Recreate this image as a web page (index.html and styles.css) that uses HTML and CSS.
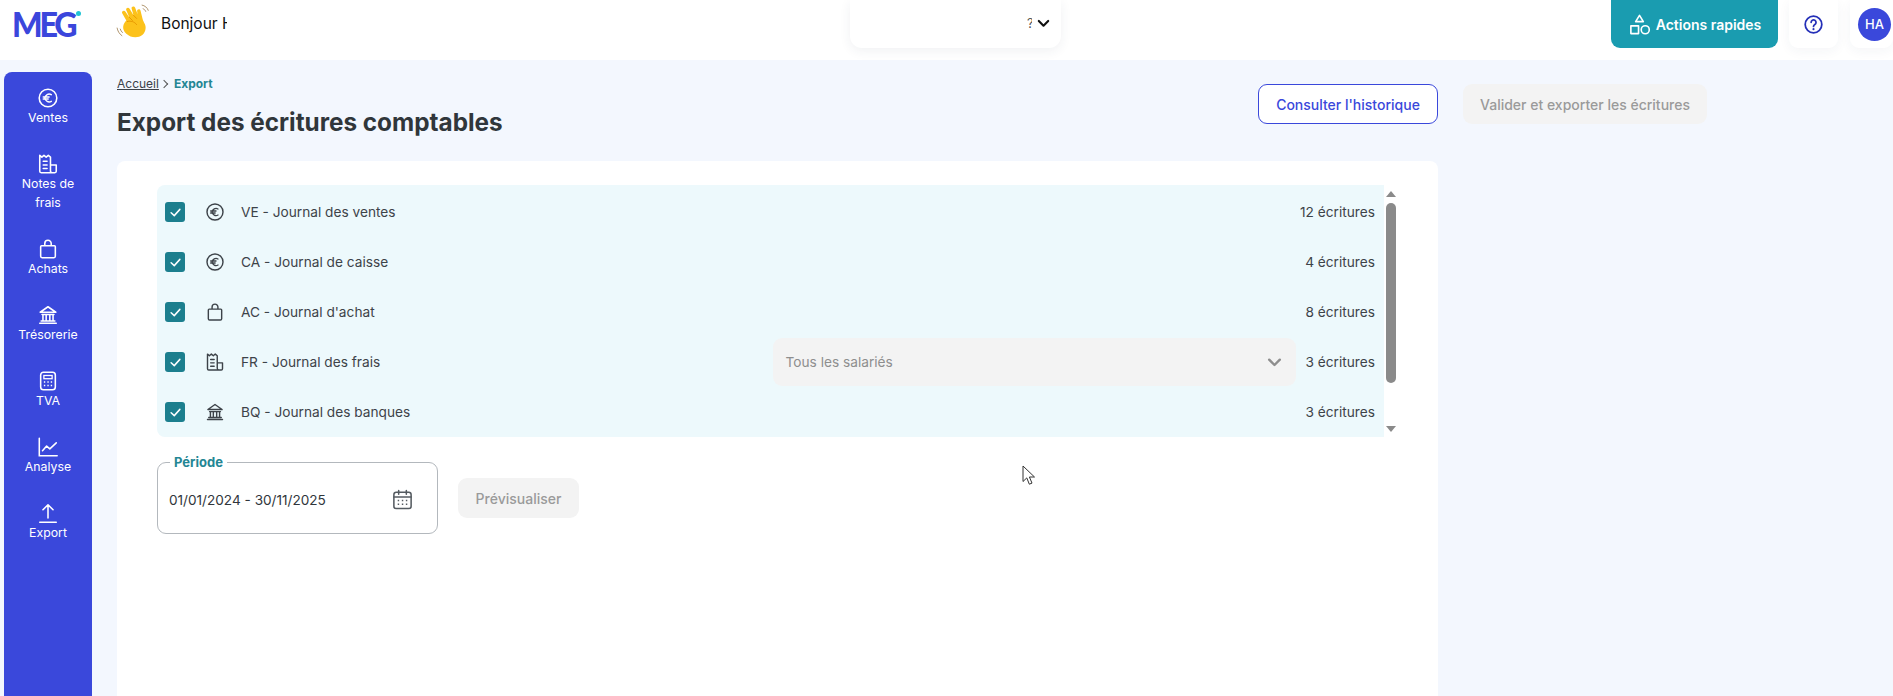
FILE: index.html
```html
<!DOCTYPE html>
<html lang="fr">
<head>
<meta charset="utf-8">
<title>Export des écritures comptables</title>
<link rel="stylesheet" href="styles.css">
</head>
<body>
<svg class="defs" width="0" height="0" aria-hidden="true">
  <symbol id="i-euro" viewBox="0 0 24 24"><circle cx="12" cy="12" r="9.600" fill="none" stroke="currentColor" stroke-width="1.700"/><path d="M15.600 8.400a4.600 4.600 0 0 0-7 3.600 4.600 4.600 0 0 0 7 3.600M6.800 10.800h6.400M6.800 13.200h5.400" fill="none" stroke="currentColor" stroke-width="1.600" stroke-linecap="round"/></symbol>
  <symbol id="i-receipt" viewBox="0 0 24 24"><path d="M17 21.500H4.500A1.500 1.500 0 0 1 3 20V2.500l2.300 2L7.600 2.500 10 4.500l2.300-2 2.400 2V19.500a2 2 0 0 0 2 2h2.800a1.500 1.500 0 0 0 1.500-1.500v-7h-6.500" fill="none" stroke="currentColor" stroke-width="1.700" stroke-linejoin="round"/><path d="M6.800 9h4.200M6.800 13h4.200M6.800 17h4.200" stroke="currentColor" stroke-width="1.700" stroke-linecap="round"/></symbol>
  <symbol id="i-bag" viewBox="0 0 24 24"><path d="M5 8.500h14a1 1 0 0 1 1 1V20a1.500 1.500 0 0 1-1.500 1.500h-13A1.500 1.500 0 0 1 4 20V9.500a1 1 0 0 1 1-1zM8.500 8.500V6a3.500 3.500 0 0 1 7 0v2.500" fill="none" stroke="currentColor" stroke-width="1.700" stroke-linejoin="round"/></symbol>
  <symbol id="i-bank" viewBox="0 0 24 24"><path d="M3.500 9 12 3l8.500 6zM5.500 11.500h13M6.500 12v6M10 12v6M14 12v6M17.500 12v6M4.500 18.500h15M3 21h18" fill="none" stroke="currentColor" stroke-width="1.700" stroke-linejoin="round" stroke-linecap="round"/></symbol>
  <symbol id="i-calc" viewBox="0 0 24 24"><rect x="4" y="2.500" width="16" height="19" rx="3" fill="none" stroke="currentColor" stroke-width="1.700"/><rect x="7.500" y="6" width="9" height="3.500" fill="none" stroke="currentColor" stroke-width="1.400"/><path d="M7.500 13h1.500M11.300 13h1.500M15 13h1.500M7.500 17h1.500M11.300 17h1.500M15 17h1.500" stroke="currentColor" stroke-width="1.700"/></symbol>
  <symbol id="i-chart" viewBox="0 0 24 24"><path d="M2.500 2.500V21.500H22" fill="none" stroke="currentColor" stroke-width="1.700" stroke-linecap="round"/><path d="M6 16l4.500-5 3.500 3 7-6.500" fill="none" stroke="currentColor" stroke-width="1.700" stroke-linecap="round" stroke-linejoin="round"/></symbol>
  <symbol id="i-export" viewBox="0 0 24 24"><path d="M12 17.500V3M6.500 8.500 12 3l5.500 5.500M3 22h18" fill="none" stroke="currentColor" stroke-width="1.700" stroke-linecap="round" stroke-linejoin="round"/></symbol>
  <symbol id="i-check" viewBox="0 0 24 24"><path d="M5 12.500 10 17l9-10" fill="none" stroke="currentColor" stroke-width="2.400" stroke-linecap="round" stroke-linejoin="round"/></symbol>
  <symbol id="i-chev" viewBox="0 0 24 24"><path d="M4.500 8 12 15.500 19.500 8" fill="none" stroke="currentColor" stroke-width="3.400" stroke-linecap="round" stroke-linejoin="round"/></symbol>
</svg>

<header class="topbar">
  <div class="brand"><span class="logo">MEG</span><span class="logo-dot"></span></div>
  <svg class="wave" viewBox="0 0 36 36" aria-hidden="true">
    <path d="M11 30C6 25 8 20 11 17L7 10c-1-2 2-3.500 3.200-1.500L14 14l-3-7c-1-2 2-3.500 3.200-1.500L18 12l-1.800-6.500c-.6-2.200 2.600-3 3.400-.8L22 11l-.5-3c-.3-2.200 2.800-2.800 3.300-.6l2 8c1 4 3.200 5 3 9-.3 6-5 9-10 9-3.500 0-6-1-8.800-3.400z" fill="#fcc21b"/>
    <path d="M12 18c3-1 7 0 9 3M14 14l3 3M18 12l3 3" fill="none" stroke="#e59600" stroke-width=".9" stroke-linecap="round"/>
    <path d="M2 24c.5 3 2 6 5 8M5 25c.5 1.500 1.200 3 2.500 4M26 2c3 .5 5.500 2.500 6.500 5.500M27 5.500c1.500.5 2.500 1.500 3 3" fill="none" stroke="#a98d63" stroke-width=".9"/>
  </svg>
  <div class="hello">Bonjour Hugo</div>
  <div class="company"><span class="company-name">?</span><svg class="company-chev"><use href="#i-chev"/></svg></div>
  <button class="quick">
    <svg class="quick-ico" viewBox="0 0 24 24" aria-hidden="true"><path d="M12 2.500 16 9H8zM3 13.500h8v8H3z" fill="none" stroke="currentColor" stroke-width="1.700" stroke-linejoin="round"/><circle cx="18" cy="17.500" r="4.200" fill="none" stroke="currentColor" stroke-width="1.700"/></svg>
    Actions rapides
  </button>
  <div class="tile"><svg class="help" viewBox="0 0 24 24" aria-hidden="true"><circle cx="12" cy="12" r="9.500" fill="none" stroke="currentColor" stroke-width="2"/><path d="M9.300 9.500a2.800 2.800 0 1 1 4.300 2.400c-1 .6-1.600 1.200-1.600 2.300" fill="none" stroke="currentColor" stroke-width="2" stroke-linecap="round"/><circle cx="12" cy="17.300" r="1.200" fill="currentColor"/></svg></div>
  <div class="tile tile-user"><span class="avatar">HA</span></div>
</header>

<div class="app">
  <nav class="sidebar">
    <a class="nav-item"><svg class="nav-ico"><use href="#i-euro"/></svg><span>Ventes</span></a>
    <a class="nav-item"><svg class="nav-ico"><use href="#i-receipt"/></svg><span>Notes de frais</span></a>
    <a class="nav-item"><svg class="nav-ico"><use href="#i-bag"/></svg><span>Achats</span></a>
    <a class="nav-item"><svg class="nav-ico"><use href="#i-bank"/></svg><span>Trésorerie</span></a>
    <a class="nav-item"><svg class="nav-ico"><use href="#i-calc"/></svg><span>TVA</span></a>
    <a class="nav-item"><svg class="nav-ico"><use href="#i-chart"/></svg><span>Analyse</span></a>
    <a class="nav-item"><svg class="nav-ico"><use href="#i-export"/></svg><span>Export</span></a>
  </nav>

  <main class="content">
    <div class="head">
      <div class="head-left">
        <div class="crumbs"><a class="crumb-link">Accueil</a><span class="crumb-sep"></span><span class="crumb-cur">Export</span></div>
        <h1 class="title">Export des écritures comptables</h1>
      </div>
      <button class="btn-outline">Consulter l'historique</button>
    </div>
    <button class="btn-disabled btn-validate">Valider et exporter les écritures</button>

    <section class="card">
      <div class="list-wrap">
        <ul class="list">
          <li class="row"><span class="check"><svg><use href="#i-check"/></svg></span><svg class="row-ico"><use href="#i-euro"/></svg><span class="row-name">VE - Journal des ventes</span><span class="row-count">12 écritures</span></li>
          <li class="row"><span class="check"><svg><use href="#i-check"/></svg></span><svg class="row-ico"><use href="#i-euro"/></svg><span class="row-name">CA - Journal de caisse</span><span class="row-count">4 écritures</span></li>
          <li class="row"><span class="check"><svg><use href="#i-check"/></svg></span><svg class="row-ico"><use href="#i-bag"/></svg><span class="row-name">AC - Journal d'achat</span><span class="row-count">8 écritures</span></li>
          <li class="row"><span class="check"><svg><use href="#i-check"/></svg></span><svg class="row-ico"><use href="#i-receipt"/></svg><span class="row-name">FR - Journal des frais</span>
            <div class="select"><span>Tous les salariés</span><svg class="select-chev"><use href="#i-chev"/></svg></div>
            <span class="row-count">3 écritures</span></li>
          <li class="row"><span class="check"><svg><use href="#i-check"/></svg></span><svg class="row-ico"><use href="#i-bank"/></svg><span class="row-name">BQ - Journal des banques</span><span class="row-count">3 écritures</span></li>
        </ul>
        <div class="scrollbar"><span class="arrow-up"></span><span class="thumb"></span><span class="arrow-down"></span></div>
      </div>
      <div class="filters">
        <fieldset class="period">
          <legend>Période</legend>
          <span class="dates">01/01/2024 - 30/11/2025</span>
          <svg class="cal" viewBox="0 0 24 24" aria-hidden="true"><rect x="3" y="4.500" width="18" height="17" rx="2.500" fill="none" stroke="currentColor" stroke-width="1.600"/><path d="M3 9.500h18M8 2.500v4M16 2.500v4" fill="none" stroke="currentColor" stroke-width="1.600" stroke-linecap="round"/><path d="M7 13h1.500M11.300 13h1.500M15.500 13H17M7 17h1.500M11.300 17h1.500M15.500 17H17" stroke="currentColor" stroke-width="1.500"/></svg>
        </fieldset>
        <button class="btn-disabled btn-preview">Prévisualiser</button>
      </div>
    </section>
  </main>
</div>

<svg class="cursor" viewBox="0 0 14 21" aria-hidden="true"><path d="M1 1v15.500l3.800-3.600 2.500 6.300 2.700-1.100-2.600-6.100H12.500z" fill="#fff" stroke="#333" stroke-width="1"/></svg>
</body>
</html>
```
FILE: styles.css
```css
* { box-sizing: border-box; }
html, body { margin: 0; padding: 0; }
body {
  width: 1893px;
  height: 696px;
  overflow: hidden;
  background: #f3f7fe;
  font-family: Inter, "Noto Sans", sans-serif;
  color: #3d4349;
  position: relative;
}
.defs { position: absolute; }
button { font-family: inherit; }

/* top bar */
.topbar {
  height: 60px;
  background: #fff;
  display: flex;
  align-items: flex-start;
  padding-left: 12px;
}
.brand { width: 103px; height: 47px; display: flex; align-items: flex-start; }
.logo {
  font-family: Lato, sans-serif;
  font-weight: 900;
  font-size: 35px;
  line-height: 46px;
  letter-spacing: -3.500px;
  color: #3b46dc;
  transform: scaleX(.92);
  transform-origin: left center;
}
.logo-dot {
  width: 5px;
  height: 5px;
  border-radius: 50%;
  background: #20c4d4;
  margin: 11px 0 0 -4px;
}
.wave { width: 37px; height: 37px; margin-top: 3px; flex: none; }
.hello {
  width: 66px;
  margin: 14px 0 0 9px;
  overflow: hidden;
  white-space: nowrap;
  font-size: 15.500px;
  line-height: 20px;
  color: #111;
}
.company {
  width: 211px;
  height: 48px;
  margin-left: 623px;
  border-radius: 0 0 12px 12px;
  background: #fff;
  box-shadow: 0 3px 12px rgba(40, 50, 90, .07);
  display: flex;
  justify-content: flex-end;
  align-items: flex-start;
  padding: 13px 10px 0 0;
}
.company-name { font-size: 13px; line-height: 20px; width: 5px; overflow: hidden; color: #555; }
.company-chev { width: 15px; height: 15px; margin: 3px 0 0 4px; color: #111; }
.quick {
  width: 167px;
  height: 48px;
  margin-left: 550px;
  border: 0;
  border-radius: 0 0 9px 9px;
  background: #1a9cb0;
  color: #fff;
  font-size: 14px;
  font-weight: 600;
  display: flex;
  align-items: center;
  justify-content: center;
  gap: 5px;
  padding: 0;
}
.quick-ico { width: 23px; height: 23px; }
.tile {
  width: 49px;
  height: 48px;
  margin-left: 11px;
  border-radius: 0 0 9px 9px;
  background: #fff;
  box-shadow: 0 3px 12px rgba(40, 50, 90, .05);
  display: flex;
  align-items: center;
  justify-content: center;
}
.help { width: 21px; height: 21px; color: #2530b8; }
.tile-user { margin-left: 12px; width: 43px; justify-content: flex-start; padding-left: 8px; }
.avatar {
  width: 33px;
  height: 33px;
  flex: none;
  border-radius: 50%;
  background: #3a48db;
  color: #fff;
  font-size: 13px;
  font-weight: 500;
  display: flex;
  align-items: center;
  justify-content: center;
}

/* layout */
.app { display: flex; height: 636px; padding-left: 4px; }

/* sidebar */
.sidebar {
  width: 88px;
  margin-top: 12px;
  padding-top: 15px;
  border-radius: 8px 8px 0 0;
  background: #3a48db;
  color: #fff;
  display: flex;
  flex-direction: column;
  gap: 26px;
  flex: none;
}
.nav-item {
  display: flex;
  flex-direction: column;
  align-items: center;
  text-align: center;
  font-size: 12.300px;
  line-height: 19px;
  padding: 0 14px;
}
.nav-ico { width: 22px; height: 22px; margin-bottom: -1px; display: block; flex: none; }

/* main */
.content {
  margin-left: 25px;
  display: grid;
  grid-template-columns: 1321px 244px;
  column-gap: 25px;
  grid-template-rows: 101px 1fr;
  align-items: start;
}
.head {
  display: flex;
  justify-content: space-between;
  align-items: flex-start;
}
.crumbs {
  display: flex;
  align-items: center;
  font-size: 12px;
  line-height: 16px;
  margin-top: 16px;
}
.crumb-link { text-decoration: underline; color: #3d4349; }
.crumb-sep {
  width: 6px;
  height: 6px;
  border-top: 1.300px solid #555;
  border-right: 1.300px solid #555;
  transform: rotate(45deg);
  margin: 0 7px 0 2px;
}
.crumb-cur { color: #248694; font-weight: 700; }
.title {
  margin: 14px 0 0;
  font-size: 24.300px;
  line-height: 32px;
  font-weight: 700;
  color: #30363b;
}
.btn-outline {
  width: 180px;
  height: 40px;
  margin-top: 24px;
  border: 1.500px solid #3a48db;
  border-radius: 9px;
  background: #fff;
  color: #3a48db;
  font-size: 14px;
  font-weight: 500;
  padding: 0;
}
.btn-disabled {
  border: 0;
  border-radius: 9px;
  background: #f3f3f3;
  color: #9a9a9a;
  font-size: 14px;
  font-weight: 500;
  padding: 0;
}
.btn-validate { width: 244px; height: 40px; margin-top: 24px; }

/* card */
.card {
  grid-column: 1;
  height: 535px;
  background: #fff;
  border-radius: 8px 8px 0 0;
  padding: 24px 40px 0;
}
.list-wrap { display: flex; height: 252px; }
.list {
  list-style: none;
  margin: 0;
  padding: 2px 9px 0 8px;
  width: 1227px;
  background: #edf9fc;
  border-radius: 8px 0 0 8px;
}
.row {
  height: 50px;
  display: flex;
  align-items: center;
  font-size: 13.700px;
}
.check {
  width: 20px;
  height: 20px;
  border-radius: 3px;
  background: #1c7f8e;
  color: #fff;
  display: flex;
  align-items: center;
  justify-content: center;
  flex: none;
}
.check svg { width: 15px; height: 15px; }
.row-ico { width: 20px; height: 20px; margin: 0 16px 0 20px; flex: none; color: #3d4349; }
.row-name { flex: 1; }
.row-count { white-space: nowrap; }
.select {
  width: 523px;
  height: 48px;
  margin-right: 10px;
  border-radius: 9px;
  background: #f3f3f3;
  color: #8e8e8e;
  display: flex;
  align-items: center;
  justify-content: space-between;
  padding: 0 13px;
}
.select-chev { width: 17px; height: 17px; color: #8e8e8e; }
.scrollbar {
  width: 14px;
  display: flex;
  flex-direction: column;
  align-items: center;
  padding: 6px 0 5px;
}
.arrow-up, .arrow-down {
  width: 0;
  height: 0;
  border-left: 5px solid transparent;
  border-right: 5px solid transparent;
}
.arrow-up { border-bottom: 6px solid #8a8a8a; }
.arrow-down { border-top: 6px solid #8a8a8a; margin-top: auto; }
.thumb {
  width: 10px;
  height: 180px;
  margin-top: 6px;
  border-radius: 5px;
  background: #8a8a8a;
}

/* filters */
.filters { display: flex; align-items: center; margin-top: 25px; gap: 20px; }
.period {
  width: 281px;
  height: 80px;
  margin: -8px 0 0;
  padding: 0 11px 4px;
  border: 1px solid #b3b8bd;
  border-radius: 9px;
  display: flex;
  align-items: center;
  justify-content: space-between;
  color: #30363b;
}
.period legend {
  margin-left: 1px;
  padding: 0 4px;
  color: #248694;
  font-size: 13px;
  line-height: 16px;
  font-weight: 700;
}
.dates { font-size: 13.600px; }
.cal { width: 23px; height: 23px; margin-right: 12px; color: #555b61; }
.btn-preview { width: 121px; height: 40px; }

/* pointer captured in the screenshot */
.cursor { position: absolute; left: 1022px; top: 465px; width: 14px; height: 21px; }
```
